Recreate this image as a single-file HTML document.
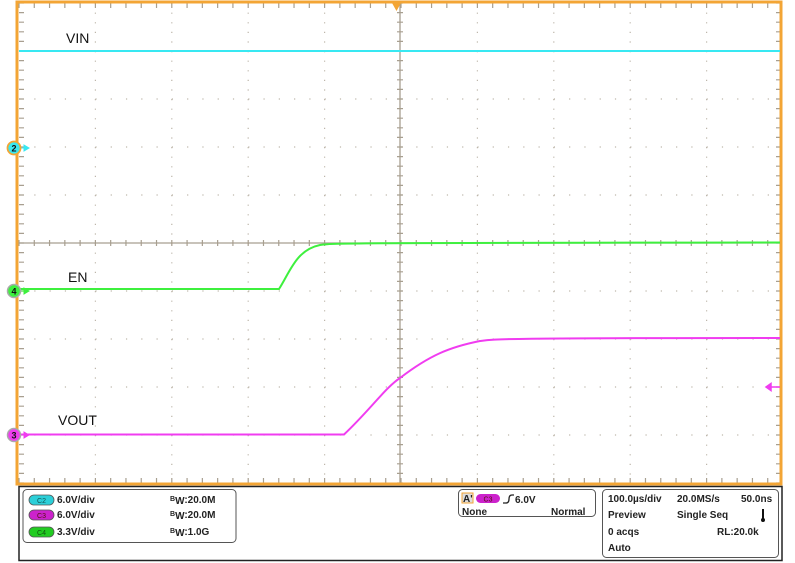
<!DOCTYPE html>
<html><head><meta charset="utf-8"><style>
body{margin:0;width:795px;height:563px;background:#fff;overflow:hidden;font-family:"Liberation Sans",sans-serif}
svg{position:absolute;left:0;top:0}
.t{font-family:"Liberation Sans",sans-serif;font-size:10px;font-weight:bold;fill:#222}
</style></head><body>
<svg width="795" height="563" viewBox="0 0 795 563">
<g stroke="#bdb6aa" stroke-width="1.2" stroke-dasharray="1.2 8.4">
<line x1="95.4" y1="3" x2="95.4" y2="483"/><line x1="171.8" y1="3" x2="171.8" y2="483"/>
<line x1="248.2" y1="3" x2="248.2" y2="483"/><line x1="324.6" y1="3" x2="324.6" y2="483"/>
<line x1="477.4" y1="3" x2="477.4" y2="483"/><line x1="553.8" y1="3" x2="553.8" y2="483"/>
<line x1="630.2" y1="3" x2="630.2" y2="483"/><line x1="706.6" y1="3" x2="706.6" y2="483"/>
</g>
<g stroke="#bdb6aa" stroke-width="1.2" stroke-dasharray="1.2 14.08">
<line x1="19" y1="51" x2="781" y2="51"/><line x1="19" y1="99" x2="781" y2="99"/>
<line x1="19" y1="147" x2="781" y2="147"/><line x1="19" y1="195" x2="781" y2="195"/>
<line x1="19" y1="291" x2="781" y2="291"/><line x1="19" y1="339" x2="781" y2="339"/>
<line x1="19" y1="387" x2="781" y2="387"/><line x1="19" y1="435" x2="781" y2="435"/>
</g>
<line x1="19" y1="243" x2="781" y2="243" stroke="#a89f90" stroke-width="1.3"/>
<line x1="400" y1="3" x2="400" y2="483" stroke="#a89f90" stroke-width="1.3"/>
<g stroke="#a89f90" stroke-width="6" stroke-dasharray="1.2 14.08"><line x1="18.4" y1="243" x2="781" y2="243"/></g>
<g stroke="#a89f90" stroke-width="6" stroke-dasharray="1.2 8.4"><line x1="400" y1="2.4" x2="400" y2="483"/></g>
<g stroke="#a89f90" stroke-width="5" stroke-dasharray="1.2 14.08"><line x1="18.4" y1="5.5" x2="781" y2="5.5"/><line x1="18.4" y1="480.5" x2="781" y2="480.5"/></g>
<g stroke="#a89f90" stroke-width="5" stroke-dasharray="1.2 8.4"><line x1="21.5" y1="2.4" x2="21.5" y2="483"/><line x1="778.5" y1="2.4" x2="778.5" y2="483"/></g>
<rect x="17" y="2" width="764" height="482" fill="none" stroke="#f3a535" stroke-width="3"/>
<line x1="19" y1="51" x2="780" y2="51" stroke="#38e8f2" stroke-width="2"/>
<path d="M19 289 L279 289 C290 272 296 250 320 245 C330 243 340 243 780 242.5" fill="none" stroke="#3ef03e" stroke-width="2"/>
<path d="M19 434.5 L344 434.5 C370 410 385 388 400 378 C430 355 450 347 480 341 C495 339 500 338 780 338" fill="none" stroke="#f03cf0" stroke-width="2"/>
<text x="66" y="43" font-size="14" fill="#111">VIN</text>
<text x="68" y="282" font-size="14" fill="#111">EN</text>
<text x="58" y="425" font-size="14" fill="#111">VOUT</text>
<path d="M20 148 h8 M24 145 l5 3 l-5 3z" stroke="#38e8f2" fill="#38e8f2"/>
<circle cx="14" cy="148" r="6.5" fill="#38e8f2" stroke="#f3a535" stroke-width="1.8"/>
<text x="14" y="151.5" font-size="9" font-weight="bold" text-anchor="middle" fill="#111">2</text>
<path d="M20 291 h8 M24 288 l5 3 l-5 3z" stroke="#3ef03e" fill="#3ef03e"/>
<circle cx="14" cy="291" r="6.5" fill="#3ef03e" stroke="#aaa" stroke-width="1.5"/>
<text x="14" y="294.5" font-size="9" font-weight="bold" text-anchor="middle" fill="#111">4</text>
<path d="M20 435 h8 M24 432 l5 3 l-5 3z" stroke="#f03cf0" fill="#f03cf0"/>
<circle cx="14" cy="435" r="6.5" fill="#f03cf0" stroke="#aaa" stroke-width="1.5"/>
<text x="14" y="438.5" font-size="9" font-weight="bold" text-anchor="middle" fill="#111">3</text>
<path d="M766 387 h14 M766 387 l5 -3.5 v7z" stroke="#f03cf0" fill="#f03cf0" stroke-width="1.5"/>
<path d="M392 3 h9 l-4.5 8z" fill="#f3a535"/>
<rect x="19" y="486.5" width="763" height="74" fill="#fff" stroke="#222" stroke-width="1.5"/>
<rect x="23" y="489.5" width="213" height="53" rx="4" fill="#fff" stroke="#555" stroke-width="1"/>
<rect x="458.5" y="489.5" width="137" height="27" rx="4" fill="#fff" stroke="#555"/>
<rect x="602.5" y="489.5" width="176" height="68" rx="4" fill="#fff" stroke="#555"/>
<rect x="29" y="495" width="25" height="10" rx="5" fill="#2ccfd8" stroke="#555" stroke-width=".8"/>
<text x="41.5" y="503" font-size="7" text-anchor="middle" fill="#155">C2</text>
<rect x="29" y="510" width="25" height="10" rx="5" fill="#cc22cc" stroke="#555" stroke-width=".8"/>
<text x="41.5" y="518" font-size="7" text-anchor="middle" fill="#511">C3</text>
<rect x="29" y="527" width="25" height="10" rx="5" fill="#22cc22" stroke="#555" stroke-width=".8"/>
<text x="41.5" y="535" font-size="7" text-anchor="middle" fill="#151">C4</text>
<text class="t" x="57" y="503">6.0V/div</text>
<text class="t" x="57" y="518">6.0V/div</text>
<text class="t" x="57" y="535">3.3V/div</text>
<text class="t" x="170" y="501"><tspan font-size="7">B</tspan><tspan dy="3">W</tspan><tspan dy="-1">:20.0M</tspan></text>
<text class="t" x="170" y="516"><tspan font-size="7">B</tspan><tspan dy="3">W</tspan><tspan dy="-1">:20.0M</tspan></text>
<text class="t" x="170" y="533"><tspan font-size="7">B</tspan><tspan dy="3">W</tspan><tspan dy="-1">:1.0G</tspan></text>
<rect x="462" y="493" width="11" height="10" fill="#ddd" stroke="#f3a535"/>
<text class="t" x="463" y="502" font-size="9">A'</text>
<rect x="476" y="494" width="24" height="9" rx="4.5" fill="#cc22cc"/>
<text x="488" y="501.5" font-size="7" text-anchor="middle" fill="#511">C3</text>
<path d="M503 503 h3 q3 0 3 -4 q0 -4 3 -4 h2" fill="none" stroke="#222" stroke-width="1.3"/>
<text class="t" x="515" y="503">6.0V</text>
<text class="t" x="462" y="515">None</text>
<text class="t" x="551" y="515">Normal</text>
<text class="t" x="608" y="502">100.0µs/div</text>
<text class="t" x="677" y="502">20.0MS/s</text>
<text class="t" x="741" y="502">50.0ns</text>
<text class="t" x="608" y="518">Preview</text>
<text class="t" x="677" y="518">Single Seq</text>
<path d="M763 509 v10" stroke="#111" stroke-width="2"/><circle cx="763" cy="520" r="2" fill="#111"/>
<text class="t" x="608" y="535">0 acqs</text>
<text class="t" x="717" y="535">RL:20.0k</text>
<text class="t" x="608" y="551">Auto</text>
</svg>
</body></html>
